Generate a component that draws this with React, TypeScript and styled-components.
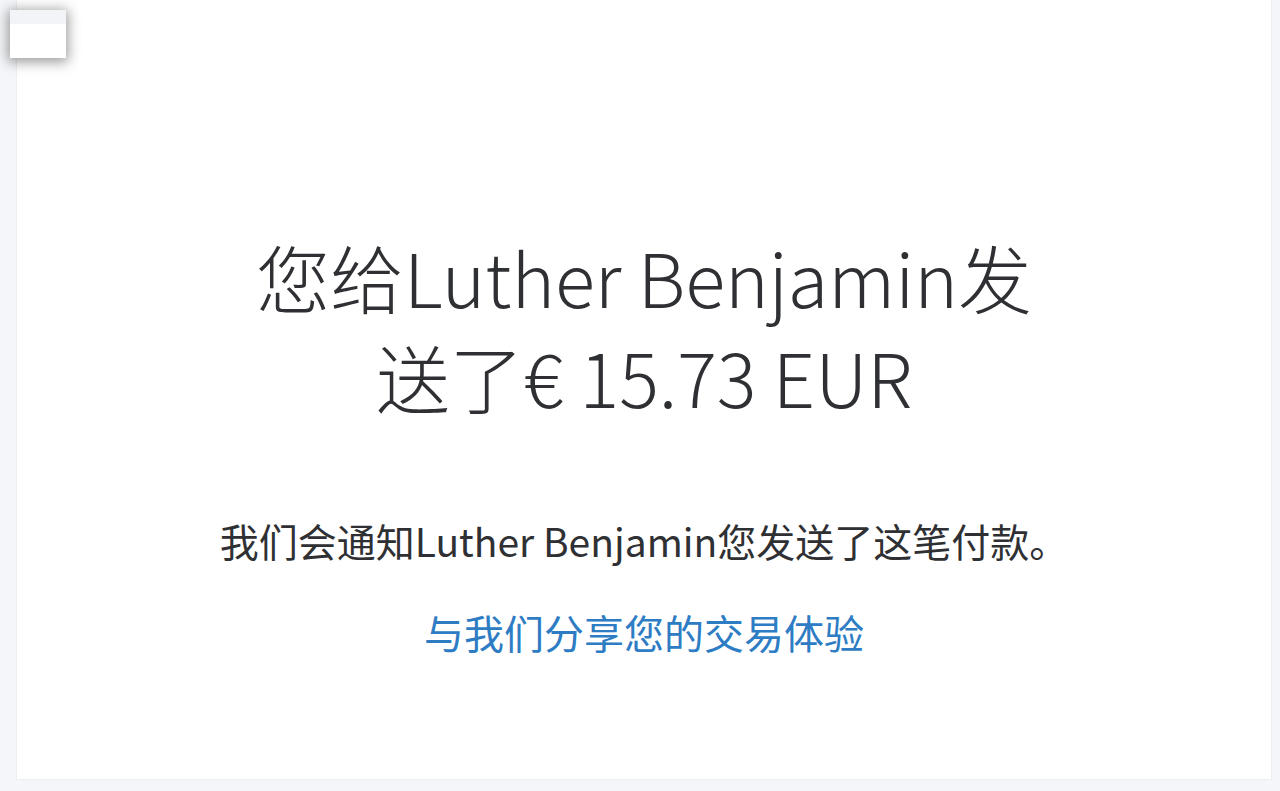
import React from 'react';
import styled, { createGlobalStyle } from 'styled-components';

const GlobalStyle = createGlobalStyle`
  html, body {
    margin: 0;
    padding: 0;
    background: #f5f6f9;
  }
  body {
    font-family: 'Noto Sans CJK SC', 'Noto Sans', sans-serif;
    color: #2f3033;
  }
`;

const Page = styled.div`
  width: 1280px;
  height: 791px;
  box-sizing: border-box;
  padding: 0 8px 11px 16px;
  position: relative;
`;

const Card = styled.main`
  height: 100%;
  box-sizing: border-box;
  background: #ffffff;
  border: 1px solid #eceef2;
  border-top: none;
  display: flex;
  flex-direction: column;
  align-items: center;
  padding-top: 226px;
`;

// small floating box in the top-left corner
const Corner = styled.div`
  position: absolute;
  top: 10px;
  left: 10px;
  width: 56px;
  height: 48px;
  box-sizing: border-box;
  background: linear-gradient(#f3f4f8 0 14px, #ffffff 14px);
  box-shadow: 0 2px 12px 2px rgba(0, 0, 0, 0.4);
`;

const Title = styled.h1`
  margin: 0;
  width: 800px;
  text-align: center;
  font-size: 74px;
  font-weight: 300;
  line-height: 100px;
  color: #2f3033;
`;

const Note = styled.p`
  margin: 88px 0 0;
  font-size: 39px;
  line-height: 52px;
  color: #2f3033;
`;

const Feedback = styled.a`
  margin-top: 38px;
  font-size: 40px;
  line-height: 56px;
  color: #2d7cc4;
  text-decoration: none;
  cursor: pointer;
`;

const App = () => {
  return (
    <>
      <GlobalStyle />
      <Page>
        <Corner />
        <Card>
          <Title>您给Luther Benjamin发送了€ 15.73 EUR</Title>
          <Note>我们会通知Luther Benjamin您发送了这笔付款。</Note>
          <Feedback>与我们分享您的交易体验</Feedback>
        </Card>
      </Page>
    </>
  );
};

export default App;
